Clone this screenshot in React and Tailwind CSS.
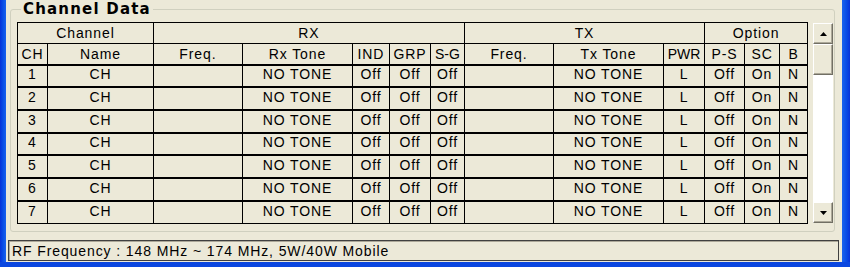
import React from "react";

const cols = [30, 106, 89, 110, 37, 41, 34, 89, 110, 41, 40, 35, 28];

const rows = [1, 2, 3, 4, 5, 6, 7].map((n) => ({
  ch: n,
  name: "CH",
  rxFreq: "",
  rxTone: "NO TONE",
  ind: "Off",
  grp: "Off",
  sg: "Off",
  txFreq: "",
  txTone: "NO TONE",
  pwr: "L",
  ps: "Off",
  sc: "On",
  b: "N",
}));

const cell = "border border-black text-center align-middle p-0 leading-none";
const dataCell = `${cell} border-t-2 pb-[3px]`;

const ScrollButton = ({ down }) => (
  <div className="h-[21px] w-full bg-[#ece9d8] border border-t-white border-l-white border-r-[#716f64] border-b-[#716f64] flex items-center justify-center shadow-[inset_-1px_-1px_0_#aca899]">
    <svg width="7" height="4" viewBox="0 0 7 4">
      {down ? (
        <path d="M0 0h7L3.5 4z" fill="#000" />
      ) : (
        <path d="M0 4h7L3.5 0z" fill="#000" />
      )}
    </svg>
  </div>
);

const App = () => {
  return (
    <div className="w-[850px] h-[267px] flex flex-col overflow-hidden bg-[#0a3fd8] font-['Liberation_Sans',Arial,sans-serif] text-black">
      <div className="flex flex-1 min-h-0">
        <div className="w-[6px] bg-gradient-to-r from-[#0831d9] via-[#0b4ee6] to-[#1a63ee]" />

        <div className="flex-1 bg-[#ece9d8] flex flex-col">
          {/* Channel Data group */}
          <div className="relative mt-[9px] ml-[4px] mr-[7px] h-[223px] border border-[#d0d0bf] rounded-[3px] pl-[6px] pt-[12px] pr-[1px] flex">
            <span className="absolute left-[10px] -top-[10px] px-[2px] bg-[#ece9d8] font-['DejaVu_Sans',Verdana,sans-serif] font-bold text-[15px] leading-[18px] tracking-[1.2px]">
              Channel Data
            </span>

            <table className="table-fixed border-collapse w-[791px] text-[14px] tracking-[0.9px] self-start">
              <colgroup>
                {cols.map((w, i) => (
                  <col key={i} style={{ width: w }} />
                ))}
              </colgroup>
              <thead>
                <tr className="h-[21px]">
                  <td colSpan={2} className={cell}>Channel</td>
                  <td colSpan={5} className={cell}>RX</td>
                  <td colSpan={3} className={cell}>TX</td>
                  <td colSpan={3} className={cell}>Option</td>
                </tr>
                <tr className="h-[21px]">
                  <td className={cell}>CH</td>
                  <td className={cell}>Name</td>
                  <td className={cell}>Freq.</td>
                  <td className={cell}>Rx Tone</td>
                  <td className={cell}>IND</td>
                  <td className={cell}>GRP</td>
                  <td className={`${cell} tracking-normal`}>S-G</td>
                  <td className={cell}>Freq.</td>
                  <td className={cell}>Tx Tone</td>
                  <td className={`${cell} tracking-normal`}>PWR</td>
                  <td className={cell}>P-S</td>
                  <td className={cell}>SC</td>
                  <td className={cell}>B</td>
                </tr>
              </thead>
              <tbody>
                {rows.map((r) => (
                  <tr key={r.ch} className="h-[22.7px]">
                    <td className={dataCell}>{r.ch}</td>
                    <td className={dataCell}>{r.name}</td>
                    <td className={dataCell}>{r.rxFreq}</td>
                    <td className={dataCell}>{r.rxTone}</td>
                    <td className={dataCell}>{r.ind}</td>
                    <td className={dataCell}>{r.grp}</td>
                    <td className={dataCell}>{r.sg}</td>
                    <td className={dataCell}>{r.txFreq}</td>
                    <td className={dataCell}>{r.txTone}</td>
                    <td className={dataCell}>{r.pwr}</td>
                    <td className={dataCell}>{r.ps}</td>
                    <td className={dataCell}>{r.sc}</td>
                    <td className={dataCell}>{r.b}</td>
                  </tr>
                ))}
              </tbody>
            </table>

            {/* scrollbar */}
            <div className="ml-[5px] w-[20px] h-[200px] mt-[1px] flex flex-col bg-white">
              <ScrollButton />
              <div className="h-[31px] w-full bg-[#ece9d8] border border-t-white border-l-white border-r-[#716f64] border-b-[#716f64] shadow-[inset_-1px_-1px_0_#aca899]" />
              <div className="flex-1 bg-white" />
              <ScrollButton down />
            </div>
          </div>

          {/* status line */}
          <div className="mt-[8px] ml-[2px] mr-[3px] h-[21px] border border-[#404040] shadow-[inset_1px_1px_0_#aca899] flex items-center pl-[3px] text-[14px] tracking-[0.9px] leading-none">
            RF Frequency : 148 MHz ~ 174 MHz, 5W/40W Mobile
          </div>
        </div>

        <div className="w-[8px] bg-gradient-to-r from-[#1a63ee] via-[#0b4ee6] to-[#0831d9]" />
      </div>
      <div className="h-[5px] bg-[#0b47e0]" />
    </div>
  );
};

export default App;
